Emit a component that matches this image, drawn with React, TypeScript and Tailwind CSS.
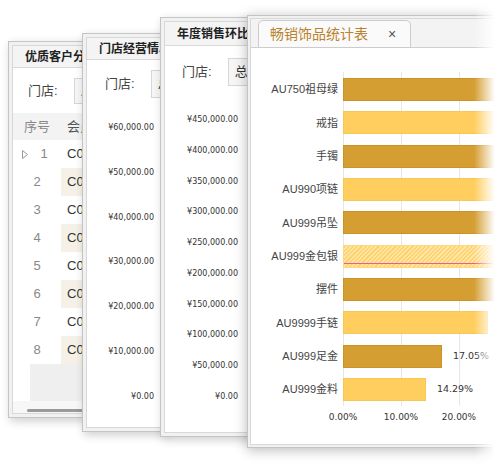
import React from 'react';

const bars = [
  { name: 'AU750祖母绿', pct: 38, tone: 'dark' },
  { name: '戒指', pct: 34, tone: 'light' },
  { name: '手镯', pct: 31, tone: 'dark' },
  { name: 'AU990项链', pct: 29, tone: 'light' },
  { name: 'AU999吊坠', pct: 27, tone: 'dark' },
  { name: 'AU999金包银', pct: 26, tone: 'hover' },
  { name: '摆件', pct: 26, tone: 'dark' },
  { name: 'AU9999手链', pct: 25, tone: 'light' },
  { name: 'AU999足金', pct: 17.05, tone: 'dark', label: '17.05%' },
  { name: 'AU999金料', pct: 14.29, tone: 'light', label: '14.29%' },
];

const barTone: Record<string, string> = {
  dark: 'bg-[#d49e33] border-[#cc9226]',
  light: 'bg-[#ffce5e] border-[#f8c653]',
  hover:
    'bg-[repeating-linear-gradient(135deg,#ffd36c_0px,#ffd36c_1.5px,#ffe6a8_1.5px,#ffe6a8_3px)] border-[#ffd77c]',
};

const Win: React.FC<{ className: string; children: React.ReactNode }> = ({ className, children }) => (
  <div
    className={`absolute border border-[#c4c4c4] bg-[#f1f1f1] p-[3px] shadow-[2px_3px_9px_rgba(0,0,0,0.2)] ${className}`}
  >
    <div className="flex h-full flex-col overflow-hidden border border-[#d8d8d8] bg-white">{children}</div>
  </div>
);

const WinTitle: React.FC<{ text: string; h: string }> = ({ text, h }) => (
  <div
    className={`flex shrink-0 items-center overflow-hidden whitespace-nowrap border-b border-[#d9d9d9] bg-[#f4f4f4] px-[12px] text-[12px] font-bold text-[#222] ${h}`}
  >
    {text}
  </div>
);

const StoreFilter: React.FC<{ h: string; pl: string; boxH: string }> = ({ h, pl, boxH }) => (
  <div
    className={`flex shrink-0 items-center gap-[16px] overflow-hidden whitespace-nowrap text-[13px] text-[#444] ${h} ${pl}`}
  >
    <span>门店:</span>
    <div
      className={`flex w-[120px] shrink-0 items-center border border-[#d6d6d6] bg-[#f6f6f6] px-[6px] text-[#333] ${boxH}`}
    >
      总部
    </div>
  </div>
);

const YAxis: React.FC<{ labels: string[]; cls: string }> = ({ labels, cls }) => (
  <div
    className={`flex shrink-0 flex-col justify-between text-right text-[8px] leading-[12px] text-[#333] [font-family:'DejaVu_Sans',sans-serif] ${cls}`}
  >
    {labels.map((l) => (
      <div key={l}>{l}</div>
    ))}
  </div>
);

export default function App() {
  return (
    <div className="relative h-[467px] w-[500px] overflow-hidden bg-white [font-family:'Liberation_Sans','Noto_Sans_CJK_SC',sans-serif]">
      {/* 优质客户分析 */}
      <Win className="left-[8px] top-[41px] h-[377px] w-[80px]">
        <WinTitle text="优质客户分析" h="h-[22px] px-[11px]" />
        <StoreFilter h="h-[45px]" pl="pl-[15px]" boxH="h-[26px]" />
        <div className="flex h-[27px] shrink-0 items-center overflow-hidden whitespace-nowrap bg-[#f3f3f3] text-[13px] text-[#888]">
          <div className="w-[48px] shrink-0 text-center">序号</div>
          <div className="pl-[6px] text-[#555]">会员</div>
        </div>
        {[1, 2, 3, 4, 5, 6, 7, 8].map((n) => (
          <div key={n} className="flex h-[28px] shrink-0 text-[13px]">
            <div className="flex w-[48px] shrink-0 items-center justify-center text-[#888]">
              {n === 1 ? (
                <div className="flex items-center gap-[12px] pr-[4px]">
                  <svg width="6" height="9" viewBox="0 0 6 9">
                    <polygon points="0.5,0.5 5.5,4.5 0.5,8.5" fill="none" stroke="#9a9a9a" strokeWidth="1" />
                  </svg>
                  <span>1</span>
                </div>
              ) : (
                n
              )}
            </div>
            <div
              className={`flex flex-1 items-center overflow-hidden pl-[6px] text-[#333] ${n % 2 === 0 ? 'bg-[#f6f1e6]' : 'bg-white'}`}
            >
              C0
            </div>
          </div>
        ))}
        <div className="ml-[17px] h-[37px] shrink-0 bg-[#efefef]" />
        <div className="flex h-[12px] shrink-0 items-end bg-[#f7f7f7] pb-[1px] pl-[14px]">
          <div className="h-[3px] w-[120px] rounded-full bg-[#9a9a9a]" />
        </div>
      </Win>

      {/* 门店经营情况 */}
      <Win className="left-[82px] top-[33px] h-[399px] w-[84px]">
        <WinTitle text="门店经营情况" h="h-[22px]" />
        <StoreFilter h="h-[48px]" pl="pl-[18px]" boxH="h-[28px]" />
        <YAxis
          cls="mt-[14px] h-[281px] w-[67px]"
          labels={['¥60,000.00', '¥50,000.00', '¥40,000.00', '¥30,000.00', '¥20,000.00', '¥10,000.00', '¥0.00']}
        />
      </Win>

      {/* 年度销售环比 */}
      <Win className="left-[160px] top-[17px] h-[420px] w-[92px]">
        <WinTitle text="年度销售环比分析" h="h-[24px]" />
        <StoreFilter h="h-[51px]" pl="pl-[17px]" boxH="h-[28px]" />
        <YAxis
          cls="mt-[17px] h-[289px] w-[73px]"
          labels={[
            '¥450,000.00',
            '¥400,000.00',
            '¥350,000.00',
            '¥300,000.00',
            '¥250,000.00',
            '¥200,000.00',
            '¥150,000.00',
            '¥100,000.00',
            '¥50,000.00',
            '¥0.00',
          ]}
        />
      </Win>

      {/* 畅销饰品统计表 */}
      <div className="absolute left-[247px] top-[15px] h-[433px] w-[300px] border border-[#c4c4c4] bg-[#f1f1f1] p-[2px] shadow-[0_2px_12px_rgba(0,0,0,0.28)]">
        <div className="flex h-full flex-col overflow-hidden border border-[#d8d8d8] bg-white">
          <div className="flex h-[29px] shrink-0 items-end border-b border-[#cfcfcf] bg-[#f3f3f3] pl-[7px]">
            <div className="-mb-px flex h-[28px] w-[153px] items-center gap-[20px] whitespace-nowrap rounded-t-[5px] border border-[#cccccc] bg-[#fafafa] pl-[11px]">
              <span className="text-[14px] text-[#b9822e]">畅销饰品统计表</span>
              <span className="text-[14px] leading-none text-[#555]">×</span>
            </div>
          </div>

          <div className="relative mt-[24px] shrink-0">
            <div className="absolute inset-y-0 left-[92px] flex">
              <div className="h-full w-[58px] border-l border-[#e6e6e6]" />
              <div className="h-full w-[58px] border-l border-[#e6e6e6]" />
              <div className="h-full w-[58px] border-l border-[#e6e6e6]" />
              <div className="h-full w-[58px] border-l border-[#e6e6e6]" />
            </div>
            <div className="relative flex flex-col pt-[1px]">
              {bars.map((b) => (
                <div key={b.name} className="flex h-[33.33px] items-center">
                  <div className="w-[87px] shrink-0 whitespace-nowrap text-right text-[11px] text-[#444]">{b.name}</div>
                  <div className="ml-[5px] flex flex-1 items-center">
                    <div
                      className={`relative h-[23px] shrink-0 border ${barTone[b.tone]}`}
                      style={{ width: `${b.pct * 5.8}px` }}
                    >
                      {b.tone === 'hover' && <div className="absolute inset-x-0 top-[17px] h-px bg-[#e2609a]" />}
                    </div>
                    {b.label && (
                      <span className="ml-[11px] text-[9.5px] text-[#333] [font-family:'DejaVu_Sans',sans-serif]">
                        {b.label}
                      </span>
                    )}
                  </div>
                </div>
              ))}
            </div>
          </div>

          <div className="ml-[63px] mt-[5px] flex text-[9px] leading-[12px] text-[#333] [font-family:'DejaVu_Sans',sans-serif]">
            <div className="w-[58px] text-center">0.00%</div>
            <div className="w-[58px] text-center">10.00%</div>
            <div className="w-[58px] text-center">20.00%</div>
          </div>
        </div>
      </div>

      {/* right edge fade */}
      <div className="pointer-events-none absolute right-0 top-0 h-full w-[26px] bg-[linear-gradient(to_right,rgba(255,255,255,0),#ffffff_80%)]" />
    </div>
  );
}
